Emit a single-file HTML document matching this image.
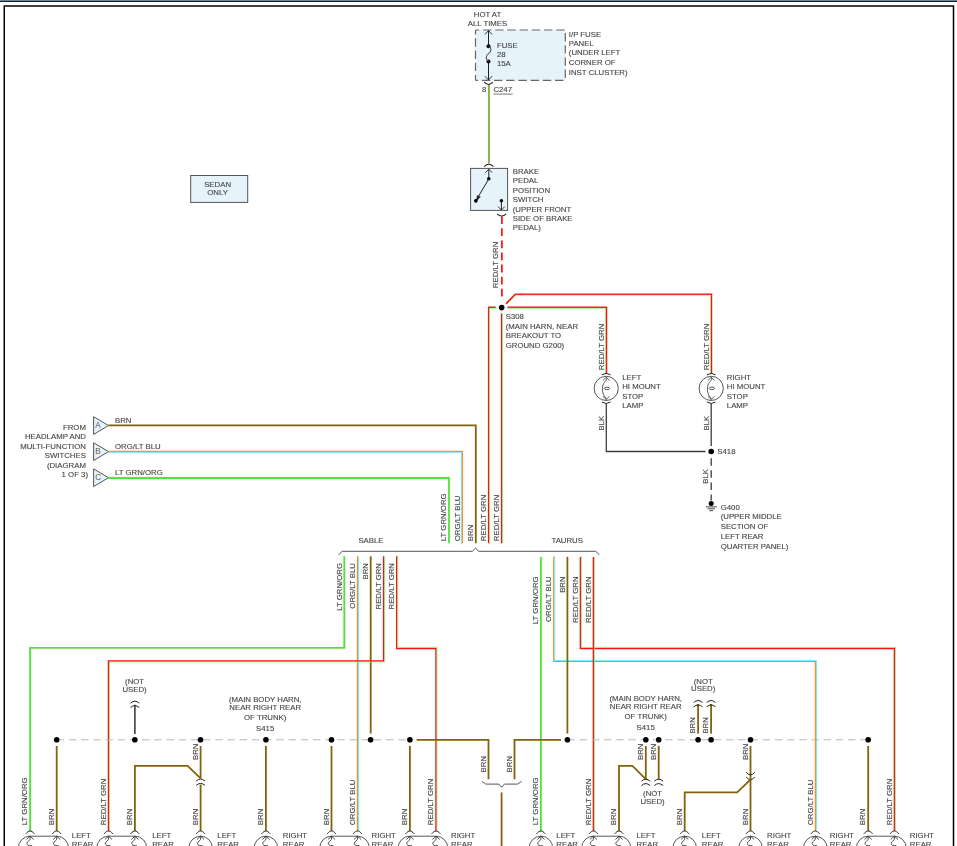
<!DOCTYPE html>
<html><head><meta charset="utf-8"><style>
html,body{margin:0;padding:0;background:#fff;width:957px;height:846px;overflow:hidden}
svg{display:block;will-change:transform}
text{font-family:"Liberation Sans",sans-serif}
</style></head><body>
<svg width="957" height="846" viewBox="0 0 957 846" font-family="Liberation Sans, sans-serif"><rect x="0" y="0" width="957" height="1" fill="#6f8296"/>
<rect x="0" y="1" width="957" height="1" fill="#142030"/>
<rect x="4.25" y="6" width="949.25" height="900" fill="none" stroke="#000" stroke-width="1.5"/>
<rect x="475.5" y="30" width="89.8" height="50.3" fill="#e6f3fb" stroke="none"/>
<path d="M475.5,30 L565.3,30" stroke="#666" stroke-width="1.2" fill="none" stroke-dasharray="8.4 3.8" stroke-dashoffset="4.7"/>
<path d="M475.5,80.3 L565.3,80.3" stroke="#666" stroke-width="1.2" fill="none" stroke-dasharray="8.4 3.8" stroke-dashoffset="5.9"/>
<path d="M475.5,30 L475.5,80.3" stroke="#666" stroke-width="1.2" fill="none" stroke-dasharray="8.4 3.8" stroke-dashoffset="3.9"/>
<path d="M565.3,30 L565.3,80.3" stroke="#666" stroke-width="1.2" fill="none" stroke-dasharray="8.4 3.8" stroke-dashoffset="9.2"/>
<path d="M488.5,30.6 L488.5,46.1 M488.5,61.5 L488.5,80" stroke="#222" stroke-width="1" fill="none" />
<path d="M484.90,34.40 L488.50,30.60 L492.10,34.40" stroke="#222" stroke-width="0.9" fill="none" />
<path d="M484.90,76.20 L488.50,80.00 L492.10,76.20" stroke="#222" stroke-width="0.9" fill="none" />
<circle cx="488.50" cy="46.20" r="2.0" fill="#000"/>
<circle cx="488.50" cy="61.50" r="2.0" fill="#000"/>
<path d="M488.5,46.2 C491.8,47.5 491.8,51.5 488.5,53.6 C485.4,55.6 485.4,59.5 488.5,61.5" stroke="#555" stroke-width="1.1" fill="none" />
<text x="496.90" y="47.70" text-anchor="start" font-size="7.8" fill="#444444" stroke="#444444" stroke-width="0.12">FUSE</text>
<text x="496.90" y="56.90" text-anchor="start" font-size="7.8" fill="#444444" stroke="#444444" stroke-width="0.12">28</text>
<text x="496.90" y="66.30" text-anchor="start" font-size="7.8" fill="#444444" stroke="#444444" stroke-width="0.12">15A</text>
<text x="487.50" y="16.70" text-anchor="middle" font-size="7.8" fill="#444444" stroke="#444444" stroke-width="0.12">HOT AT</text>
<text x="487.50" y="25.50" text-anchor="middle" font-size="7.8" fill="#444444" stroke="#444444" stroke-width="0.12">ALL TIMES</text>
<text x="568.80" y="36.70" text-anchor="start" font-size="7.8" fill="#444444" stroke="#444444" stroke-width="0.12">I/P FUSE</text>
<text x="568.80" y="45.90" text-anchor="start" font-size="7.8" fill="#444444" stroke="#444444" stroke-width="0.12">PANEL</text>
<text x="568.80" y="55.40" text-anchor="start" font-size="7.8" fill="#444444" stroke="#444444" stroke-width="0.12">(UNDER LEFT</text>
<text x="568.80" y="64.90" text-anchor="start" font-size="7.8" fill="#444444" stroke="#444444" stroke-width="0.12">CORNER OF</text>
<text x="568.80" y="74.50" text-anchor="start" font-size="7.8" fill="#444444" stroke="#444444" stroke-width="0.12">INST CLUSTER)</text>
<path d="M484.10,82.20 Q488.50,86.80 492.90,82.20" stroke="#222" stroke-width="1.1" fill="none" />
<text x="486.30" y="91.50" text-anchor="end" font-size="7.8" fill="#444444" stroke="#444444" stroke-width="0.12">8</text>
<text x="493.40" y="91.50" text-anchor="start" font-size="7.8" fill="#444444" stroke="#444444" stroke-width="0.12">C247</text>
<path d="M493.4,94.1 L512.6,94.1" stroke="#555" stroke-width="0.8" fill="none" />
<path d="M488.50,85.00 L488.50,163.50" stroke="#22ee22" stroke-width="1.15" fill="none" stroke-linejoin="miter" stroke-linecap="butt"/>
<path d="M489.50,85.00 L489.50,163.50" stroke="#ff5a5a" stroke-width="0.8" fill="none" stroke-linejoin="miter" stroke-linecap="butt"/>
<path d="M484.20,166.60 Q488.80,162.00 493.40,166.60" stroke="#222" stroke-width="1.1" fill="none" />
<rect x="470.6" y="168.4" width="37" height="42" fill="#e6f3fb" stroke="#555" stroke-width="1"/>
<path d="M488.8,169.2 L488.8,178.8" stroke="#222" stroke-width="1" fill="none" />
<path d="M485.40,172.60 L488.80,169.20 L492.20,172.60" stroke="#222" stroke-width="0.9" fill="none" />
<circle cx="488.80" cy="178.80" r="1.8" fill="#000"/>
<path d="M488.8,178.8 L475.8,200.9" stroke="#222" stroke-width="1" fill="none" />
<path d="M477.2,195.6 L480.4,196.8 L476.6,201 Z" stroke="#222" stroke-width="0.5" fill="#222" />
<circle cx="475.80" cy="200.90" r="1.8" fill="#000"/>
<circle cx="501.40" cy="200.70" r="1.8" fill="#000"/>
<path d="M501.4,200.7 L501.4,210" stroke="#222" stroke-width="1" fill="none" />
<path d="M498.00,206.60 L501.40,210.00 L504.80,206.60" stroke="#222" stroke-width="0.9" fill="none" />
<path d="M497.00,213.80 Q501.60,218.20 506.20,213.80" stroke="#222" stroke-width="1.1" fill="none" />
<text x="512.75" y="173.70" text-anchor="start" font-size="7.8" fill="#444444" stroke="#444444" stroke-width="0.12">BRAKE</text>
<text x="512.75" y="182.80" text-anchor="start" font-size="7.8" fill="#444444" stroke="#444444" stroke-width="0.12">PEDAL</text>
<text x="512.75" y="192.60" text-anchor="start" font-size="7.8" fill="#444444" stroke="#444444" stroke-width="0.12">POSITION</text>
<text x="512.75" y="201.80" text-anchor="start" font-size="7.8" fill="#444444" stroke="#444444" stroke-width="0.12">SWITCH</text>
<text x="512.75" y="211.50" text-anchor="start" font-size="7.8" fill="#444444" stroke="#444444" stroke-width="0.12">(UPPER FRONT</text>
<text x="512.75" y="220.70" text-anchor="start" font-size="7.8" fill="#444444" stroke="#444444" stroke-width="0.12">SIDE OF BRAKE</text>
<text x="512.75" y="230.40" text-anchor="start" font-size="7.8" fill="#444444" stroke="#444444" stroke-width="0.12">PEDAL)</text>
<path d="M501.90,216.20 L501.90,298.00" stroke="#ff1010" stroke-width="1.7" fill="none" stroke-linejoin="miter" stroke-linecap="butt" stroke-dasharray="7.8 4.3"/>
<text transform="translate(497.80,288.20) rotate(-90)" text-anchor="start" font-size="7.8" fill="#444444" stroke="#444444" stroke-width="0.12">RED/LT GRN</text>
<circle cx="501.70" cy="307.60" r="2.8" fill="#000"/>
<path d="M495.70,307.30 L488.60,307.30 L488.60,543.30" stroke="#ff1010" stroke-width="1.45" fill="none" stroke-linejoin="miter" stroke-linecap="butt"/>
<path d="M496.75,308.35 L489.65,308.35 L489.65,544.35" stroke="#7cf07c" stroke-width="0.75" fill="none" stroke-linejoin="miter" stroke-linecap="butt"/>
<path d="M501.60,313.50 L501.60,543.30" stroke="#ff1010" stroke-width="1.45" fill="none" stroke-linejoin="miter" stroke-linecap="butt"/>
<path d="M502.65,313.50 L502.65,543.30" stroke="#7cf07c" stroke-width="0.75" fill="none" stroke-linejoin="miter" stroke-linecap="butt"/>
<path d="M606.50,373.50 L606.50,307.30 L507.60,307.30" stroke="#ff1010" stroke-width="1.45" fill="none" stroke-linejoin="miter" stroke-linecap="butt"/>
<path d="M605.45,374.55 L605.45,308.35 L506.55,308.35" stroke="#7cf07c" stroke-width="0.75" fill="none" stroke-linejoin="miter" stroke-linecap="butt"/>
<path d="M711.50,373.50 L711.50,294.20 L514.80,294.20" stroke="#ff1010" stroke-width="1.45" fill="none" stroke-linejoin="miter" stroke-linecap="butt"/>
<path d="M710.45,374.55 L710.45,295.25 L513.75,295.25" stroke="#7cf07c" stroke-width="0.75" fill="none" stroke-linejoin="miter" stroke-linecap="butt"/>
<path d="M515.30,294.20 L506.00,303.60" stroke="#ff1010" stroke-width="1.6" fill="none" stroke-linejoin="miter" stroke-linecap="butt"/>
<path d="M515.40,295.35 L506.82,304.42" stroke="#3ee83e" stroke-width="0.75" fill="none" stroke-linejoin="miter" stroke-linecap="butt"/>
<text x="505.70" y="318.80" text-anchor="start" font-size="7.8" fill="#444444" stroke="#444444" stroke-width="0.12">S308</text>
<text x="505.70" y="328.60" text-anchor="start" font-size="7.8" fill="#444444" stroke="#444444" stroke-width="0.12">(MAIN HARN, NEAR</text>
<text x="505.70" y="338.30" text-anchor="start" font-size="7.8" fill="#444444" stroke="#444444" stroke-width="0.12">BREAKOUT TO</text>
<text x="505.70" y="347.70" text-anchor="start" font-size="7.8" fill="#444444" stroke="#444444" stroke-width="0.12">GROUND G200)</text>
<rect x="190.7" y="175.5" width="57" height="26.9" fill="#e6f3fb" stroke="#555" stroke-width="1"/>
<text x="217.60" y="186.90" text-anchor="middle" font-size="7.8" fill="#444444" stroke="#444444" stroke-width="0.12">SEDAN</text>
<text x="217.60" y="194.80" text-anchor="middle" font-size="7.8" fill="#444444" stroke="#444444" stroke-width="0.12">ONLY</text>
<path d="M601.90,374.80 Q606.20,371.80 610.50,374.80" stroke="#222" stroke-width="1.0" fill="none" />
<circle cx="606.2" cy="388.4" r="12.1" fill="none" stroke="#444" stroke-width="0.9"/>
<path d="M602.90,380.50 L606.20,377.30 L609.50,380.50" stroke="#333" stroke-width="0.8" fill="none" />
<path d="M602.90,396.30 L606.20,399.50 L609.50,396.30" stroke="#333" stroke-width="0.8" fill="none" />
<path d="M606.2,377.3 C607.8000000000001,379.6 605.0,381.2 603.6,383.6 C602.0,386.4 602.0,391 603.4000000000001,394.4 C604.2,396.8 606.8000000000001,398 606.2,399.5" stroke="#333" stroke-width="0.8" fill="none" />
<ellipse cx="606.9000000000001" cy="388.4" rx="2.8" ry="1.2" fill="none" stroke="#333" stroke-width="0.8"/>
<path d="M601.90,402.00 Q606.20,405.00 610.50,402.00" stroke="#222" stroke-width="1.0" fill="none" />
<path d="M706.90,374.80 Q711.20,371.80 715.50,374.80" stroke="#222" stroke-width="1.0" fill="none" />
<circle cx="711.2" cy="388.4" r="12.1" fill="none" stroke="#444" stroke-width="0.9"/>
<path d="M707.90,380.50 L711.20,377.30 L714.50,380.50" stroke="#333" stroke-width="0.8" fill="none" />
<path d="M707.90,396.30 L711.20,399.50 L714.50,396.30" stroke="#333" stroke-width="0.8" fill="none" />
<path d="M711.2,377.3 C712.8000000000001,379.6 710.0,381.2 708.6,383.6 C707.0,386.4 707.0,391 708.4000000000001,394.4 C709.2,396.8 711.8000000000001,398 711.2,399.5" stroke="#333" stroke-width="0.8" fill="none" />
<ellipse cx="711.9000000000001" cy="388.4" rx="2.8" ry="1.2" fill="none" stroke="#333" stroke-width="0.8"/>
<path d="M706.90,402.00 Q711.20,405.00 715.50,402.00" stroke="#222" stroke-width="1.0" fill="none" />
<text x="622.20" y="379.50" text-anchor="start" font-size="7.8" fill="#444444" stroke="#444444" stroke-width="0.12">LEFT</text>
<text x="622.20" y="388.80" text-anchor="start" font-size="7.8" fill="#444444" stroke="#444444" stroke-width="0.12">HI MOUNT</text>
<text x="622.20" y="398.50" text-anchor="start" font-size="7.8" fill="#444444" stroke="#444444" stroke-width="0.12">STOP</text>
<text x="622.20" y="407.50" text-anchor="start" font-size="7.8" fill="#444444" stroke="#444444" stroke-width="0.12">LAMP</text>
<text x="726.80" y="379.50" text-anchor="start" font-size="7.8" fill="#444444" stroke="#444444" stroke-width="0.12">RIGHT</text>
<text x="726.80" y="388.80" text-anchor="start" font-size="7.8" fill="#444444" stroke="#444444" stroke-width="0.12">HI MOUNT</text>
<text x="726.80" y="398.50" text-anchor="start" font-size="7.8" fill="#444444" stroke="#444444" stroke-width="0.12">STOP</text>
<text x="726.80" y="407.50" text-anchor="start" font-size="7.8" fill="#444444" stroke="#444444" stroke-width="0.12">LAMP</text>
<text transform="translate(603.80,370.20) rotate(-90)" text-anchor="start" font-size="7.8" fill="#444444" stroke="#444444" stroke-width="0.12">RED/LT GRN</text>
<text transform="translate(708.90,370.20) rotate(-90)" text-anchor="start" font-size="7.8" fill="#444444" stroke="#444444" stroke-width="0.12">RED/LT GRN</text>
<text transform="translate(603.50,430.60) rotate(-90)" text-anchor="start" font-size="7.8" fill="#444444" stroke="#444444" stroke-width="0.12">BLK</text>
<text transform="translate(708.50,430.60) rotate(-90)" text-anchor="start" font-size="7.8" fill="#444444" stroke="#444444" stroke-width="0.12">BLK</text>
<path d="M606.30,403.50 L606.30,451.50 L705.50,451.50" stroke="#3c3c3c" stroke-width="1.3" fill="none" stroke-linejoin="miter" stroke-linecap="butt"/>
<path d="M711.20,403.50 L711.20,446.00" stroke="#3c3c3c" stroke-width="1.3" fill="none" stroke-linejoin="miter" stroke-linecap="butt"/>
<circle cx="711.20" cy="451.50" r="2.8" fill="#000"/>
<text x="717.30" y="454.20" text-anchor="start" font-size="7.8" fill="#444444" stroke="#444444" stroke-width="0.12">S418</text>
<path d="M711.20,458.20 L711.20,500.50" stroke="#3c3c3c" stroke-width="1.3" fill="none" stroke-linejoin="miter" stroke-linecap="butt" stroke-dasharray="7.5 4.6"/>
<text transform="translate(707.70,483.70) rotate(-90)" text-anchor="start" font-size="7.8" fill="#444444" stroke="#444444" stroke-width="0.12">BLK</text>
<circle cx="711.20" cy="503.60" r="2.5" fill="#000"/>
<path d="M705.9,506.9 L716.9,506.9 M707.6,508.8 L715,508.8 M709.3,510.7 L713.1,510.7" stroke="#333" stroke-width="0.9" fill="none" />
<text x="720.70" y="509.70" text-anchor="start" font-size="7.8" fill="#444444" stroke="#444444" stroke-width="0.12">G400</text>
<text x="720.70" y="519.30" text-anchor="start" font-size="7.8" fill="#444444" stroke="#444444" stroke-width="0.12">(UPPER MIDDLE</text>
<text x="720.70" y="529.00" text-anchor="start" font-size="7.8" fill="#444444" stroke="#444444" stroke-width="0.12">SECTION OF</text>
<text x="720.70" y="538.80" text-anchor="start" font-size="7.8" fill="#444444" stroke="#444444" stroke-width="0.12">LEFT REAR</text>
<text x="720.70" y="548.50" text-anchor="start" font-size="7.8" fill="#444444" stroke="#444444" stroke-width="0.12">QUARTER PANEL)</text>
<path d="M93.6,416.70 L108.5,425.50 L93.6,434.40 Z" fill="#e6f3fb" stroke="#555" stroke-width="1"/>
<text x="98.10" y="428.20" text-anchor="middle" font-size="8.2" fill="#707070" stroke="#707070" stroke-width="0.12">A</text>
<text x="115.00" y="422.80" text-anchor="start" font-size="7.8" fill="#444444" stroke="#444444" stroke-width="0.12">BRN</text>
<path d="M93.6,442.80 L108.5,451.60 L93.6,460.50 Z" fill="#e6f3fb" stroke="#555" stroke-width="1"/>
<text x="98.10" y="454.30" text-anchor="middle" font-size="8.2" fill="#707070" stroke="#707070" stroke-width="0.12">B</text>
<text x="115.00" y="448.90" text-anchor="start" font-size="7.8" fill="#444444" stroke="#444444" stroke-width="0.12">ORG/LT BLU</text>
<path d="M93.6,468.90 L108.5,477.70 L93.6,486.60 Z" fill="#e6f3fb" stroke="#555" stroke-width="1"/>
<text x="98.10" y="480.40" text-anchor="middle" font-size="8.2" fill="#707070" stroke="#707070" stroke-width="0.12">C</text>
<text x="115.00" y="475.00" text-anchor="start" font-size="7.8" fill="#444444" stroke="#444444" stroke-width="0.12">LT GRN/ORG</text>
<path d="M108.40,425.30 L475.80,425.30 L475.80,543.30" stroke="#83620c" stroke-width="1.8" fill="none" stroke-linejoin="miter" stroke-linecap="butt"/>
<path d="M108.40,451.30 L462.40,451.30 L462.40,543.30" stroke="#ff8c1a" stroke-width="1.2" fill="none" stroke-linejoin="miter" stroke-linecap="butt"/>
<path d="M107.35,452.35 L461.35,452.35 L461.35,544.35" stroke="#70e6f5" stroke-width="0.95" fill="none" stroke-linejoin="miter" stroke-linecap="butt"/>
<path d="M108.40,478.00 L449.00,478.00 L449.00,543.30" stroke="#3ee83e" stroke-width="1.8" fill="none" stroke-linejoin="miter" stroke-linecap="butt"/>
<path d="M109.40,477.00 L450.00,477.00 L450.00,542.30" stroke="#f4c070" stroke-width="0.35" fill="none" stroke-linejoin="miter" stroke-linecap="butt"/>
<text x="85.90" y="429.80" text-anchor="end" font-size="7.8" fill="#444444" stroke="#444444" stroke-width="0.12">FROM</text>
<text x="85.90" y="439.20" text-anchor="end" font-size="7.8" fill="#444444" stroke="#444444" stroke-width="0.12">HEADLAMP AND</text>
<text x="85.90" y="448.90" text-anchor="end" font-size="7.8" fill="#444444" stroke="#444444" stroke-width="0.12">MULTI-FUNCTION</text>
<text x="85.90" y="458.40" text-anchor="end" font-size="7.8" fill="#444444" stroke="#444444" stroke-width="0.12">SWITCHES</text>
<text x="85.90" y="467.80" text-anchor="end" font-size="7.8" fill="#444444" stroke="#444444" stroke-width="0.12">(DIAGRAM</text>
<text x="88.00" y="477.20" text-anchor="end" font-size="7.8" fill="#444444" stroke="#444444" stroke-width="0.12">1 OF 3)</text>
<text transform="translate(446.20,541.20) rotate(-90)" text-anchor="start" font-size="7.8" fill="#444444" stroke="#444444" stroke-width="0.12">LT GRN/ORG</text>
<text transform="translate(459.60,541.20) rotate(-90)" text-anchor="start" font-size="7.8" fill="#444444" stroke="#444444" stroke-width="0.12">ORG/LT BLU</text>
<text transform="translate(473.00,541.20) rotate(-90)" text-anchor="start" font-size="7.8" fill="#444444" stroke="#444444" stroke-width="0.12">BRN</text>
<text transform="translate(485.50,541.20) rotate(-90)" text-anchor="start" font-size="7.8" fill="#444444" stroke="#444444" stroke-width="0.12">RED/LT GRN</text>
<text transform="translate(498.50,541.20) rotate(-90)" text-anchor="start" font-size="7.8" fill="#444444" stroke="#444444" stroke-width="0.12">RED/LT GRN</text>
<path d="M338.4,554.8 L342.2,551.3 L472.4,551.3 L475.6,548.2 L478.8,551.3 L595.8,551.3 L599.4,554.8" stroke="#555" stroke-width="1" fill="none" />
<text x="371.00" y="542.70" text-anchor="middle" font-size="7.8" fill="#444444" stroke="#444444" stroke-width="0.12">SABLE</text>
<text x="567.20" y="542.70" text-anchor="middle" font-size="7.8" fill="#444444" stroke="#444444" stroke-width="0.12">TAURUS</text>
<path d="M344.30,556.30 L344.30,647.90 L30.10,647.90 L30.10,831.20" stroke="#3ee83e" stroke-width="1.8" fill="none" stroke-linejoin="miter" stroke-linecap="butt"/>
<path d="M345.30,557.30 L345.30,648.90 L31.10,648.90 L31.10,832.20" stroke="#f4c070" stroke-width="0.35" fill="none" stroke-linejoin="miter" stroke-linecap="butt"/>
<path d="M357.50,556.30 L357.50,831.00" stroke="#ff8c1a" stroke-width="1.2" fill="none" stroke-linejoin="miter" stroke-linecap="butt"/>
<path d="M358.55,556.30 L358.55,831.00" stroke="#70e6f5" stroke-width="0.95" fill="none" stroke-linejoin="miter" stroke-linecap="butt"/>
<path d="M370.70,556.30 L370.70,733.50" stroke="#83620c" stroke-width="1.8" fill="none" stroke-linejoin="miter" stroke-linecap="butt"/>
<path d="M383.60,556.30 L383.60,660.90 L108.50,660.90 L108.50,831.00" stroke="#ff1010" stroke-width="1.45" fill="none" stroke-linejoin="miter" stroke-linecap="butt"/>
<path d="M384.65,557.35 L384.65,661.95 L109.55,661.95 L109.55,832.05" stroke="#7cf07c" stroke-width="0.75" fill="none" stroke-linejoin="miter" stroke-linecap="butt"/>
<path d="M396.70,556.30 L396.70,648.40 L436.00,648.40 L436.00,831.00" stroke="#ff1010" stroke-width="1.45" fill="none" stroke-linejoin="miter" stroke-linecap="butt"/>
<path d="M397.75,555.25 L397.75,647.35 L437.05,647.35 L437.05,829.95" stroke="#7cf07c" stroke-width="0.75" fill="none" stroke-linejoin="miter" stroke-linecap="butt"/>
<text transform="translate(341.50,563.00) rotate(-90)" text-anchor="end" font-size="7.8" fill="#444444" stroke="#444444" stroke-width="0.12">LT GRN/ORG</text>
<text transform="translate(354.70,563.00) rotate(-90)" text-anchor="end" font-size="7.8" fill="#444444" stroke="#444444" stroke-width="0.12">ORG/LT BLU</text>
<text transform="translate(367.90,563.00) rotate(-90)" text-anchor="end" font-size="7.8" fill="#444444" stroke="#444444" stroke-width="0.12">BRN</text>
<text transform="translate(380.80,563.00) rotate(-90)" text-anchor="end" font-size="7.8" fill="#444444" stroke="#444444" stroke-width="0.12">RED/LT GRN</text>
<text transform="translate(393.90,563.00) rotate(-90)" text-anchor="end" font-size="7.8" fill="#444444" stroke="#444444" stroke-width="0.12">RED/LT GRN</text>
<path d="M540.90,556.90 L540.90,831.00" stroke="#3ee83e" stroke-width="1.8" fill="none" stroke-linejoin="miter" stroke-linecap="butt"/>
<path d="M541.90,556.90 L541.90,831.00" stroke="#f4c070" stroke-width="0.35" fill="none" stroke-linejoin="miter" stroke-linecap="butt"/>
<path d="M553.70,556.90 L553.70,661.50 L815.40,661.50 L815.40,831.00" stroke="#ff8c1a" stroke-width="1.2" fill="none" stroke-linejoin="miter" stroke-linecap="butt"/>
<path d="M554.75,555.85 L554.75,660.45 L816.45,660.45 L816.45,829.95" stroke="#70e6f5" stroke-width="0.95" fill="none" stroke-linejoin="miter" stroke-linecap="butt"/>
<path d="M567.40,556.90 L567.40,733.50" stroke="#83620c" stroke-width="1.8" fill="none" stroke-linejoin="miter" stroke-linecap="butt"/>
<path d="M580.40,556.90 L580.40,648.40 L894.40,648.40 L894.40,831.00" stroke="#ff1010" stroke-width="1.45" fill="none" stroke-linejoin="miter" stroke-linecap="butt"/>
<path d="M581.45,555.85 L581.45,647.35 L895.45,647.35 L895.45,829.95" stroke="#7cf07c" stroke-width="0.75" fill="none" stroke-linejoin="miter" stroke-linecap="butt"/>
<path d="M593.40,556.90 L593.40,831.00" stroke="#ff1010" stroke-width="1.45" fill="none" stroke-linejoin="miter" stroke-linecap="butt"/>
<path d="M594.45,556.90 L594.45,831.00" stroke="#7cf07c" stroke-width="0.75" fill="none" stroke-linejoin="miter" stroke-linecap="butt"/>
<text transform="translate(538.10,576.40) rotate(-90)" text-anchor="end" font-size="7.8" fill="#444444" stroke="#444444" stroke-width="0.12">LT GRN/ORG</text>
<text transform="translate(551.10,576.40) rotate(-90)" text-anchor="end" font-size="7.8" fill="#444444" stroke="#444444" stroke-width="0.12">ORG/LT BLU</text>
<text transform="translate(564.60,576.40) rotate(-90)" text-anchor="end" font-size="7.8" fill="#444444" stroke="#444444" stroke-width="0.12">BRN</text>
<text transform="translate(577.60,576.40) rotate(-90)" text-anchor="end" font-size="7.8" fill="#444444" stroke="#444444" stroke-width="0.12">RED/LT GRN</text>
<text transform="translate(590.60,576.40) rotate(-90)" text-anchor="end" font-size="7.8" fill="#444444" stroke="#444444" stroke-width="0.12">RED/LT GRN</text>
<path d="M56.70,739.80 L409.90,739.80" stroke="#b8b8b8" stroke-width="1.0" fill="none" stroke-linejoin="miter" stroke-linecap="butt" stroke-dasharray="7.5 4.7"/>
<path d="M567.40,739.80 L868.20,739.80" stroke="#b8b8b8" stroke-width="1.0" fill="none" stroke-linejoin="miter" stroke-linecap="butt" stroke-dasharray="7.5 4.7"/>
<circle cx="56.70" cy="739.80" r="2.8" fill="#000"/>
<circle cx="134.80" cy="739.80" r="2.8" fill="#000"/>
<circle cx="200.50" cy="739.80" r="2.8" fill="#000"/>
<circle cx="265.90" cy="739.80" r="2.8" fill="#000"/>
<circle cx="331.50" cy="739.80" r="2.8" fill="#000"/>
<circle cx="370.60" cy="739.80" r="2.8" fill="#000"/>
<circle cx="409.90" cy="739.80" r="2.8" fill="#000"/>
<circle cx="567.40" cy="739.80" r="2.8" fill="#000"/>
<circle cx="645.80" cy="739.80" r="2.8" fill="#000"/>
<circle cx="658.70" cy="739.80" r="2.8" fill="#000"/>
<circle cx="698.10" cy="739.80" r="2.8" fill="#000"/>
<circle cx="711.10" cy="739.80" r="2.8" fill="#000"/>
<circle cx="750.50" cy="739.80" r="2.8" fill="#000"/>
<circle cx="868.20" cy="739.80" r="2.8" fill="#000"/>
<text x="265.20" y="701.80" text-anchor="middle" font-size="7.8" fill="#444444" stroke="#444444" stroke-width="0.12">(MAIN BODY HARN,</text>
<text x="265.20" y="709.80" text-anchor="middle" font-size="7.8" fill="#444444" stroke="#444444" stroke-width="0.12">NEAR RIGHT REAR</text>
<text x="265.20" y="719.60" text-anchor="middle" font-size="7.8" fill="#444444" stroke="#444444" stroke-width="0.12">OF TRUNK)</text>
<text x="265.20" y="730.60" text-anchor="middle" font-size="7.8" fill="#444444" stroke="#444444" stroke-width="0.12">S415</text>
<text x="645.70" y="701.00" text-anchor="middle" font-size="7.8" fill="#444444" stroke="#444444" stroke-width="0.12">(MAIN BODY HARN,</text>
<text x="645.70" y="709.00" text-anchor="middle" font-size="7.8" fill="#444444" stroke="#444444" stroke-width="0.12">NEAR RIGHT REAR</text>
<text x="645.70" y="719.30" text-anchor="middle" font-size="7.8" fill="#444444" stroke="#444444" stroke-width="0.12">OF TRUNK)</text>
<text x="645.70" y="730.40" text-anchor="middle" font-size="7.8" fill="#444444" stroke="#444444" stroke-width="0.12">S415</text>
<path d="M56.70,746.00 L56.70,831.00" stroke="#83620c" stroke-width="1.8" fill="none" stroke-linejoin="miter" stroke-linecap="butt"/>
<path d="M134.90,733.90 L134.90,704.80" stroke="#222" stroke-width="1.4" fill="none" stroke-linejoin="miter" stroke-linecap="butt"/>
<path d="M130.50,703.20 Q134.90,699.20 139.30,703.20" stroke="#222" stroke-width="1.0" fill="none" />
<path d="M130.50,707.60 Q134.90,703.60 139.30,707.60" stroke="#222" stroke-width="1.0" fill="none" />
<text x="134.60" y="683.70" text-anchor="middle" font-size="7.8" fill="#444444" stroke="#444444" stroke-width="0.12">(NOT</text>
<text x="134.60" y="691.60" text-anchor="middle" font-size="7.8" fill="#444444" stroke="#444444" stroke-width="0.12">USED)</text>
<path d="M200.60,746.00 L200.60,778.60" stroke="#83620c" stroke-width="1.8" fill="none" stroke-linejoin="miter" stroke-linecap="butt"/>
<path d="M200.60,784.50 L200.60,831.00" stroke="#83620c" stroke-width="1.8" fill="none" stroke-linejoin="miter" stroke-linecap="butt"/>
<path d="M196.20,781.00 Q200.60,777.00 205.00,781.00" stroke="#222" stroke-width="1.0" fill="none" />
<path d="M196.20,785.40 Q200.60,781.40 205.00,785.40" stroke="#222" stroke-width="1.0" fill="none" />
<path d="M134.90,831.00 L134.90,765.90 L187.60,765.90 L200.60,778.30" stroke="#83620c" stroke-width="1.8" fill="none" stroke-linejoin="miter" stroke-linecap="butt"/>
<path d="M265.90,746.00 L265.90,831.00" stroke="#83620c" stroke-width="1.8" fill="none" stroke-linejoin="miter" stroke-linecap="butt"/>
<path d="M331.50,746.00 L331.50,831.00" stroke="#83620c" stroke-width="1.8" fill="none" stroke-linejoin="miter" stroke-linecap="butt"/>
<path d="M409.90,746.00 L409.90,831.00" stroke="#83620c" stroke-width="1.8" fill="none" stroke-linejoin="miter" stroke-linecap="butt"/>
<path d="M416.60,739.80 L488.50,739.80 L488.50,779.30" stroke="#83620c" stroke-width="1.8" fill="none" stroke-linejoin="miter" stroke-linecap="butt"/>
<path d="M561.00,739.80 L514.50,739.80 L514.50,779.30" stroke="#83620c" stroke-width="1.8" fill="none" stroke-linejoin="miter" stroke-linecap="butt"/>
<path d="M481.9,781.3 L485.7,784.1 L498.8,784.1 L501.7,787.3 L504.4,784.1 L517.6,784.1 L521.7,781.3" stroke="#444" stroke-width="0.9" fill="none" />
<path d="M501.60,792.40 L501.60,846.00" stroke="#83620c" stroke-width="1.8" fill="none" stroke-linejoin="miter" stroke-linecap="butt"/>
<text transform="translate(485.70,772.40) rotate(-90)" text-anchor="start" font-size="7.8" fill="#444444" stroke="#444444" stroke-width="0.12">BRN</text>
<text transform="translate(511.70,772.40) rotate(-90)" text-anchor="start" font-size="7.8" fill="#444444" stroke="#444444" stroke-width="0.12">BRN</text>
<path d="M645.80,746.00 L645.80,779.20" stroke="#83620c" stroke-width="1.8" fill="none" stroke-linejoin="miter" stroke-linecap="butt"/>
<path d="M619.00,831.00 L619.00,765.90 L632.40,765.90 L645.80,779.20" stroke="#83620c" stroke-width="1.8" fill="none" stroke-linejoin="miter" stroke-linecap="butt"/>
<path d="M641.40,781.20 Q645.80,777.20 650.20,781.20" stroke="#222" stroke-width="1.0" fill="none" />
<path d="M641.40,785.60 Q645.80,781.60 650.20,785.60" stroke="#222" stroke-width="1.0" fill="none" />
<path d="M658.70,746.00 L658.70,779.20" stroke="#83620c" stroke-width="1.8" fill="none" stroke-linejoin="miter" stroke-linecap="butt"/>
<path d="M654.30,781.20 Q658.70,777.20 663.10,781.20" stroke="#222" stroke-width="1.0" fill="none" />
<path d="M654.30,785.60 Q658.70,781.60 663.10,785.60" stroke="#222" stroke-width="1.0" fill="none" />
<text x="652.60" y="795.90" text-anchor="middle" font-size="7.8" fill="#444444" stroke="#444444" stroke-width="0.12">(NOT</text>
<text x="652.60" y="803.70" text-anchor="middle" font-size="7.8" fill="#444444" stroke="#444444" stroke-width="0.12">USED)</text>
<path d="M698.10,733.50 L698.10,704.00" stroke="#83620c" stroke-width="1.8" fill="none" stroke-linejoin="miter" stroke-linecap="butt"/>
<path d="M711.10,733.50 L711.10,704.00" stroke="#83620c" stroke-width="1.8" fill="none" stroke-linejoin="miter" stroke-linecap="butt"/>
<path d="M693.70,702.50 Q698.10,698.50 702.50,702.50" stroke="#222" stroke-width="1.0" fill="none" />
<path d="M693.70,706.90 Q698.10,702.90 702.50,706.90" stroke="#222" stroke-width="1.0" fill="none" />
<path d="M706.70,702.50 Q711.10,698.50 715.50,702.50" stroke="#222" stroke-width="1.0" fill="none" />
<path d="M706.70,706.90 Q711.10,702.90 715.50,706.90" stroke="#222" stroke-width="1.0" fill="none" />
<text x="703.20" y="683.80" text-anchor="middle" font-size="7.8" fill="#444444" stroke="#444444" stroke-width="0.12">(NOT</text>
<text x="703.20" y="691.30" text-anchor="middle" font-size="7.8" fill="#444444" stroke="#444444" stroke-width="0.12">USED)</text>
<path d="M750.50,746.00 L750.50,779.60" stroke="#83620c" stroke-width="1.8" fill="none" stroke-linejoin="miter" stroke-linecap="butt"/>
<path d="M750.50,779.60 L750.50,831.00" stroke="#83620c" stroke-width="1.8" fill="none" stroke-linejoin="miter" stroke-linecap="butt"/>
<path d="M746.20,772.30 Q750.50,777.30 754.80,772.30" stroke="#222" stroke-width="1.0" fill="none" />
<path d="M746.20,777.10 Q750.50,782.10 754.80,777.10" stroke="#222" stroke-width="1.0" fill="none" />
<path d="M684.70,831.00 L684.70,792.30 L737.10,792.30 L750.50,779.60" stroke="#83620c" stroke-width="1.8" fill="none" stroke-linejoin="miter" stroke-linecap="butt"/>
<path d="M868.20,746.00 L868.20,831.00" stroke="#83620c" stroke-width="1.8" fill="none" stroke-linejoin="miter" stroke-linecap="butt"/>
<text transform="translate(197.80,743.60) rotate(-90)" text-anchor="end" font-size="7.8" fill="#444444" stroke="#444444" stroke-width="0.12">BRN</text>
<text transform="translate(643.00,743.50) rotate(-90)" text-anchor="end" font-size="7.8" fill="#444444" stroke="#444444" stroke-width="0.12">BRN</text>
<text transform="translate(655.90,743.50) rotate(-90)" text-anchor="end" font-size="7.8" fill="#444444" stroke="#444444" stroke-width="0.12">BRN</text>
<text transform="translate(747.70,743.50) rotate(-90)" text-anchor="end" font-size="7.8" fill="#444444" stroke="#444444" stroke-width="0.12">BRN</text>
<text transform="translate(695.30,733.60) rotate(-90)" text-anchor="start" font-size="7.8" fill="#444444" stroke="#444444" stroke-width="0.12">BRN</text>
<text transform="translate(708.30,733.60) rotate(-90)" text-anchor="start" font-size="7.8" fill="#444444" stroke="#444444" stroke-width="0.12">BRN</text>
<path d="M30.1,836.2 L56.7,836.2 A11.8,11.8 0 0 1 56.7,859.8 L30.1,859.8 A11.8,11.8 0 0 1 30.1,836.2 Z" fill="none" stroke="#444" stroke-width="0.9"/>
<path d="M25.700000000000003,833.9 C27.6,831.6 28.900000000000002,831 30.1,831 C31.3,831 32.6,831.6 34.5,833.9" stroke="#222" stroke-width="1.0" fill="none" />
<path d="M26.50,839.50 L30.10,836.20 L33.70,839.50" stroke="#333" stroke-width="0.85" fill="none" />
<path d="M30.1,836.2 L30.1,839.2 C30.1,840.8 26.900000000000002,841.2 26.900000000000002,843.4 C26.900000000000002,845.2 28.900000000000002,845.8 30.900000000000002,845.6 C32.7,845.4 33.1,847 31.6,848.5" stroke="#333" stroke-width="0.85" fill="none" />
<path d="M52.300000000000004,833.9 C54.2,831.6 55.5,831 56.7,831 C57.900000000000006,831 59.2,831.6 61.1,833.9" stroke="#222" stroke-width="1.0" fill="none" />
<path d="M53.10,839.50 L56.70,836.20 L60.30,839.50" stroke="#333" stroke-width="0.85" fill="none" />
<path d="M56.7,836.2 L56.7,839.2 C56.7,840.8 53.5,841.2 53.5,843.4 C53.5,845.2 55.5,845.8 57.5,845.6 C59.300000000000004,845.4 59.7,847 58.2,848.5" stroke="#333" stroke-width="0.85" fill="none" />
<path d="M108.5,836.2 L134.9,836.2 A11.8,11.8 0 0 1 134.9,859.8 L108.5,859.8 A11.8,11.8 0 0 1 108.5,836.2 Z" fill="none" stroke="#444" stroke-width="0.9"/>
<path d="M104.1,833.9 C106.0,831.6 107.3,831 108.5,831 C109.7,831 111.0,831.6 112.9,833.9" stroke="#222" stroke-width="1.0" fill="none" />
<path d="M104.90,839.50 L108.50,836.20 L112.10,839.50" stroke="#333" stroke-width="0.85" fill="none" />
<path d="M108.5,836.2 L108.5,839.2 C108.5,840.8 105.3,841.2 105.3,843.4 C105.3,845.2 107.3,845.8 109.3,845.6 C111.1,845.4 111.5,847 110.0,848.5" stroke="#333" stroke-width="0.85" fill="none" />
<path d="M130.5,833.9 C132.4,831.6 133.70000000000002,831 134.9,831 C136.1,831 137.4,831.6 139.3,833.9" stroke="#222" stroke-width="1.0" fill="none" />
<path d="M131.30,839.50 L134.90,836.20 L138.50,839.50" stroke="#333" stroke-width="0.85" fill="none" />
<path d="M134.9,836.2 L134.9,839.2 C134.9,840.8 131.70000000000002,841.2 131.70000000000002,843.4 C131.70000000000002,845.2 133.70000000000002,845.8 135.70000000000002,845.6 C137.5,845.4 137.9,847 136.4,848.5" stroke="#333" stroke-width="0.85" fill="none" />
<circle cx="200.6" cy="848.0" r="11.8" fill="none" stroke="#444" stroke-width="0.9"/>
<path d="M196.2,833.9 C198.1,831.6 199.4,831 200.6,831 C201.79999999999998,831 203.1,831.6 205.0,833.9" stroke="#222" stroke-width="1.0" fill="none" />
<path d="M197.00,839.50 L200.60,836.20 L204.20,839.50" stroke="#333" stroke-width="0.85" fill="none" />
<path d="M200.6,836.2 L200.6,839.2 C200.6,840.8 197.4,841.2 197.4,843.4 C197.4,845.2 199.4,845.8 201.4,845.6 C203.2,845.4 203.6,847 202.1,848.5" stroke="#333" stroke-width="0.85" fill="none" />
<circle cx="265.9" cy="848.0" r="11.8" fill="none" stroke="#444" stroke-width="0.9"/>
<path d="M261.5,833.9 C263.4,831.6 264.7,831 265.9,831 C267.09999999999997,831 268.4,831.6 270.29999999999995,833.9" stroke="#222" stroke-width="1.0" fill="none" />
<path d="M262.30,839.50 L265.90,836.20 L269.50,839.50" stroke="#333" stroke-width="0.85" fill="none" />
<path d="M265.9,836.2 L265.9,839.2 C265.9,840.8 262.7,841.2 262.7,843.4 C262.7,845.2 264.7,845.8 266.7,845.6 C268.5,845.4 268.9,847 267.4,848.5" stroke="#333" stroke-width="0.85" fill="none" />
<path d="M331.5,836.2 L357.5,836.2 A11.8,11.8 0 0 1 357.5,859.8 L331.5,859.8 A11.8,11.8 0 0 1 331.5,836.2 Z" fill="none" stroke="#444" stroke-width="0.9"/>
<path d="M327.1,833.9 C329.0,831.6 330.3,831 331.5,831 C332.7,831 334.0,831.6 335.9,833.9" stroke="#222" stroke-width="1.0" fill="none" />
<path d="M327.90,839.50 L331.50,836.20 L335.10,839.50" stroke="#333" stroke-width="0.85" fill="none" />
<path d="M331.5,836.2 L331.5,839.2 C331.5,840.8 328.3,841.2 328.3,843.4 C328.3,845.2 330.3,845.8 332.3,845.6 C334.1,845.4 334.5,847 333.0,848.5" stroke="#333" stroke-width="0.85" fill="none" />
<path d="M353.1,833.9 C355.0,831.6 356.3,831 357.5,831 C358.7,831 360.0,831.6 361.9,833.9" stroke="#222" stroke-width="1.0" fill="none" />
<path d="M353.90,839.50 L357.50,836.20 L361.10,839.50" stroke="#333" stroke-width="0.85" fill="none" />
<path d="M357.5,836.2 L357.5,839.2 C357.5,840.8 354.3,841.2 354.3,843.4 C354.3,845.2 356.3,845.8 358.3,845.6 C360.1,845.4 360.5,847 359.0,848.5" stroke="#333" stroke-width="0.85" fill="none" />
<path d="M409.9,836.2 L436.0,836.2 A11.8,11.8 0 0 1 436.0,859.8 L409.9,859.8 A11.8,11.8 0 0 1 409.9,836.2 Z" fill="none" stroke="#444" stroke-width="0.9"/>
<path d="M405.5,833.9 C407.4,831.6 408.7,831 409.9,831 C411.09999999999997,831 412.4,831.6 414.29999999999995,833.9" stroke="#222" stroke-width="1.0" fill="none" />
<path d="M406.30,839.50 L409.90,836.20 L413.50,839.50" stroke="#333" stroke-width="0.85" fill="none" />
<path d="M409.9,836.2 L409.9,839.2 C409.9,840.8 406.7,841.2 406.7,843.4 C406.7,845.2 408.7,845.8 410.7,845.6 C412.5,845.4 412.9,847 411.4,848.5" stroke="#333" stroke-width="0.85" fill="none" />
<path d="M431.6,833.9 C433.5,831.6 434.8,831 436.0,831 C437.2,831 438.5,831.6 440.4,833.9" stroke="#222" stroke-width="1.0" fill="none" />
<path d="M432.40,839.50 L436.00,836.20 L439.60,839.50" stroke="#333" stroke-width="0.85" fill="none" />
<path d="M436.0,836.2 L436.0,839.2 C436.0,840.8 432.8,841.2 432.8,843.4 C432.8,845.2 434.8,845.8 436.8,845.6 C438.6,845.4 439.0,847 437.5,848.5" stroke="#333" stroke-width="0.85" fill="none" />
<circle cx="540.9" cy="848.0" r="11.8" fill="none" stroke="#444" stroke-width="0.9"/>
<path d="M536.5,833.9 C538.4,831.6 539.6999999999999,831 540.9,831 C542.1,831 543.4,831.6 545.3,833.9" stroke="#222" stroke-width="1.0" fill="none" />
<path d="M537.30,839.50 L540.90,836.20 L544.50,839.50" stroke="#333" stroke-width="0.85" fill="none" />
<path d="M540.9,836.2 L540.9,839.2 C540.9,840.8 537.6999999999999,841.2 537.6999999999999,843.4 C537.6999999999999,845.2 539.6999999999999,845.8 541.6999999999999,845.6 C543.5,845.4 543.9,847 542.4,848.5" stroke="#333" stroke-width="0.85" fill="none" />
<path d="M593.4,836.2 L619.0,836.2 A11.8,11.8 0 0 1 619.0,859.8 L593.4,859.8 A11.8,11.8 0 0 1 593.4,836.2 Z" fill="none" stroke="#444" stroke-width="0.9"/>
<path d="M589.0,833.9 C590.9,831.6 592.1999999999999,831 593.4,831 C594.6,831 595.9,831.6 597.8,833.9" stroke="#222" stroke-width="1.0" fill="none" />
<path d="M589.80,839.50 L593.40,836.20 L597.00,839.50" stroke="#333" stroke-width="0.85" fill="none" />
<path d="M593.4,836.2 L593.4,839.2 C593.4,840.8 590.1999999999999,841.2 590.1999999999999,843.4 C590.1999999999999,845.2 592.1999999999999,845.8 594.1999999999999,845.6 C596.0,845.4 596.4,847 594.9,848.5" stroke="#333" stroke-width="0.85" fill="none" />
<path d="M614.6,833.9 C616.5,831.6 617.8,831 619.0,831 C620.2,831 621.5,831.6 623.4,833.9" stroke="#222" stroke-width="1.0" fill="none" />
<path d="M615.40,839.50 L619.00,836.20 L622.60,839.50" stroke="#333" stroke-width="0.85" fill="none" />
<path d="M619.0,836.2 L619.0,839.2 C619.0,840.8 615.8,841.2 615.8,843.4 C615.8,845.2 617.8,845.8 619.8,845.6 C621.6,845.4 622.0,847 620.5,848.5" stroke="#333" stroke-width="0.85" fill="none" />
<circle cx="684.7" cy="848.0" r="11.8" fill="none" stroke="#444" stroke-width="0.9"/>
<path d="M680.3000000000001,833.9 C682.2,831.6 683.5,831 684.7,831 C685.9000000000001,831 687.2,831.6 689.1,833.9" stroke="#222" stroke-width="1.0" fill="none" />
<path d="M681.10,839.50 L684.70,836.20 L688.30,839.50" stroke="#333" stroke-width="0.85" fill="none" />
<path d="M684.7,836.2 L684.7,839.2 C684.7,840.8 681.5,841.2 681.5,843.4 C681.5,845.2 683.5,845.8 685.5,845.6 C687.3000000000001,845.4 687.7,847 686.2,848.5" stroke="#333" stroke-width="0.85" fill="none" />
<circle cx="750.5" cy="848.0" r="11.8" fill="none" stroke="#444" stroke-width="0.9"/>
<path d="M746.1,833.9 C748.0,831.6 749.3,831 750.5,831 C751.7,831 753.0,831.6 754.9,833.9" stroke="#222" stroke-width="1.0" fill="none" />
<path d="M746.90,839.50 L750.50,836.20 L754.10,839.50" stroke="#333" stroke-width="0.85" fill="none" />
<path d="M750.5,836.2 L750.5,839.2 C750.5,840.8 747.3,841.2 747.3,843.4 C747.3,845.2 749.3,845.8 751.3,845.6 C753.1,845.4 753.5,847 752.0,848.5" stroke="#333" stroke-width="0.85" fill="none" />
<circle cx="815.3" cy="848.0" r="11.8" fill="none" stroke="#444" stroke-width="0.9"/>
<path d="M810.9,833.9 C812.8,831.6 814.0999999999999,831 815.3,831 C816.5,831 817.8,831.6 819.6999999999999,833.9" stroke="#222" stroke-width="1.0" fill="none" />
<path d="M811.70,839.50 L815.30,836.20 L818.90,839.50" stroke="#333" stroke-width="0.85" fill="none" />
<path d="M815.3,836.2 L815.3,839.2 C815.3,840.8 812.0999999999999,841.2 812.0999999999999,843.4 C812.0999999999999,845.2 814.0999999999999,845.8 816.0999999999999,845.6 C817.9,845.4 818.3,847 816.8,848.5" stroke="#333" stroke-width="0.85" fill="none" />
<path d="M868.2,836.2 L894.4,836.2 A11.8,11.8 0 0 1 894.4,859.8 L868.2,859.8 A11.8,11.8 0 0 1 868.2,836.2 Z" fill="none" stroke="#444" stroke-width="0.9"/>
<path d="M863.8000000000001,833.9 C865.7,831.6 867.0,831 868.2,831 C869.4000000000001,831 870.7,831.6 872.6,833.9" stroke="#222" stroke-width="1.0" fill="none" />
<path d="M864.60,839.50 L868.20,836.20 L871.80,839.50" stroke="#333" stroke-width="0.85" fill="none" />
<path d="M868.2,836.2 L868.2,839.2 C868.2,840.8 865.0,841.2 865.0,843.4 C865.0,845.2 867.0,845.8 869.0,845.6 C870.8000000000001,845.4 871.2,847 869.7,848.5" stroke="#333" stroke-width="0.85" fill="none" />
<path d="M890.0,833.9 C891.9,831.6 893.1999999999999,831 894.4,831 C895.6,831 896.9,831.6 898.8,833.9" stroke="#222" stroke-width="1.0" fill="none" />
<path d="M890.80,839.50 L894.40,836.20 L898.00,839.50" stroke="#333" stroke-width="0.85" fill="none" />
<path d="M894.4,836.2 L894.4,839.2 C894.4,840.8 891.1999999999999,841.2 891.1999999999999,843.4 C891.1999999999999,845.2 893.1999999999999,845.8 895.1999999999999,845.6 C897.0,845.4 897.4,847 895.9,848.5" stroke="#333" stroke-width="0.85" fill="none" />
<text x="71.80" y="837.50" text-anchor="start" font-size="7.8" fill="#444444" stroke="#444444" stroke-width="0.12">LEFT</text>
<text x="71.80" y="847.20" text-anchor="start" font-size="7.8" fill="#444444" stroke="#444444" stroke-width="0.12">REAR</text>
<text x="152.20" y="837.50" text-anchor="start" font-size="7.8" fill="#444444" stroke="#444444" stroke-width="0.12">LEFT</text>
<text x="152.20" y="847.20" text-anchor="start" font-size="7.8" fill="#444444" stroke="#444444" stroke-width="0.12">REAR</text>
<text x="217.30" y="837.50" text-anchor="start" font-size="7.8" fill="#444444" stroke="#444444" stroke-width="0.12">LEFT</text>
<text x="217.30" y="847.20" text-anchor="start" font-size="7.8" fill="#444444" stroke="#444444" stroke-width="0.12">REAR</text>
<text x="282.80" y="837.50" text-anchor="start" font-size="7.8" fill="#444444" stroke="#444444" stroke-width="0.12">RIGHT</text>
<text x="282.80" y="847.20" text-anchor="start" font-size="7.8" fill="#444444" stroke="#444444" stroke-width="0.12">REAR</text>
<text x="371.60" y="837.50" text-anchor="start" font-size="7.8" fill="#444444" stroke="#444444" stroke-width="0.12">RIGHT</text>
<text x="371.60" y="847.20" text-anchor="start" font-size="7.8" fill="#444444" stroke="#444444" stroke-width="0.12">REAR</text>
<text x="451.00" y="837.50" text-anchor="start" font-size="7.8" fill="#444444" stroke="#444444" stroke-width="0.12">RIGHT</text>
<text x="451.00" y="847.20" text-anchor="start" font-size="7.8" fill="#444444" stroke="#444444" stroke-width="0.12">REAR</text>
<text x="556.30" y="837.50" text-anchor="start" font-size="7.8" fill="#444444" stroke="#444444" stroke-width="0.12">LEFT</text>
<text x="556.30" y="847.20" text-anchor="start" font-size="7.8" fill="#444444" stroke="#444444" stroke-width="0.12">REAR</text>
<text x="636.50" y="837.50" text-anchor="start" font-size="7.8" fill="#444444" stroke="#444444" stroke-width="0.12">LEFT</text>
<text x="636.50" y="847.20" text-anchor="start" font-size="7.8" fill="#444444" stroke="#444444" stroke-width="0.12">REAR</text>
<text x="701.80" y="837.50" text-anchor="start" font-size="7.8" fill="#444444" stroke="#444444" stroke-width="0.12">LEFT</text>
<text x="701.80" y="847.20" text-anchor="start" font-size="7.8" fill="#444444" stroke="#444444" stroke-width="0.12">REAR</text>
<text x="767.10" y="837.50" text-anchor="start" font-size="7.8" fill="#444444" stroke="#444444" stroke-width="0.12">RIGHT</text>
<text x="767.10" y="847.20" text-anchor="start" font-size="7.8" fill="#444444" stroke="#444444" stroke-width="0.12">REAR</text>
<text x="829.80" y="837.50" text-anchor="start" font-size="7.8" fill="#444444" stroke="#444444" stroke-width="0.12">RIGHT</text>
<text x="829.80" y="847.20" text-anchor="start" font-size="7.8" fill="#444444" stroke="#444444" stroke-width="0.12">REAR</text>
<text x="909.80" y="837.50" text-anchor="start" font-size="7.8" fill="#444444" stroke="#444444" stroke-width="0.12">RIGHT</text>
<text x="909.80" y="847.20" text-anchor="start" font-size="7.8" fill="#444444" stroke="#444444" stroke-width="0.12">REAR</text>
<text transform="translate(27.30,825.20) rotate(-90)" text-anchor="start" font-size="7.8" fill="#444444" stroke="#444444" stroke-width="0.12">LT GRN/ORG</text>
<text transform="translate(53.90,825.20) rotate(-90)" text-anchor="start" font-size="7.8" fill="#444444" stroke="#444444" stroke-width="0.12">BRN</text>
<text transform="translate(105.70,825.20) rotate(-90)" text-anchor="start" font-size="7.8" fill="#444444" stroke="#444444" stroke-width="0.12">RED/LT GRN</text>
<text transform="translate(132.10,825.20) rotate(-90)" text-anchor="start" font-size="7.8" fill="#444444" stroke="#444444" stroke-width="0.12">BRN</text>
<text transform="translate(197.80,825.20) rotate(-90)" text-anchor="start" font-size="7.8" fill="#444444" stroke="#444444" stroke-width="0.12">BRN</text>
<text transform="translate(263.10,825.20) rotate(-90)" text-anchor="start" font-size="7.8" fill="#444444" stroke="#444444" stroke-width="0.12">BRN</text>
<text transform="translate(328.70,825.20) rotate(-90)" text-anchor="start" font-size="7.8" fill="#444444" stroke="#444444" stroke-width="0.12">BRN</text>
<text transform="translate(354.70,825.20) rotate(-90)" text-anchor="start" font-size="7.8" fill="#444444" stroke="#444444" stroke-width="0.12">ORG/LT BLU</text>
<text transform="translate(407.10,825.20) rotate(-90)" text-anchor="start" font-size="7.8" fill="#444444" stroke="#444444" stroke-width="0.12">BRN</text>
<text transform="translate(433.20,825.20) rotate(-90)" text-anchor="start" font-size="7.8" fill="#444444" stroke="#444444" stroke-width="0.12">RED/LT GRN</text>
<text transform="translate(538.10,825.20) rotate(-90)" text-anchor="start" font-size="7.8" fill="#444444" stroke="#444444" stroke-width="0.12">LT GRN/ORG</text>
<text transform="translate(590.60,825.20) rotate(-90)" text-anchor="start" font-size="7.8" fill="#444444" stroke="#444444" stroke-width="0.12">RED/LT GRN</text>
<text transform="translate(616.20,825.20) rotate(-90)" text-anchor="start" font-size="7.8" fill="#444444" stroke="#444444" stroke-width="0.12">BRN</text>
<text transform="translate(681.90,825.20) rotate(-90)" text-anchor="start" font-size="7.8" fill="#444444" stroke="#444444" stroke-width="0.12">BRN</text>
<text transform="translate(747.70,825.20) rotate(-90)" text-anchor="start" font-size="7.8" fill="#444444" stroke="#444444" stroke-width="0.12">BRN</text>
<text transform="translate(812.50,825.20) rotate(-90)" text-anchor="start" font-size="7.8" fill="#444444" stroke="#444444" stroke-width="0.12">ORG/LT BLU</text>
<text transform="translate(865.40,825.20) rotate(-90)" text-anchor="start" font-size="7.8" fill="#444444" stroke="#444444" stroke-width="0.12">BRN</text>
<text transform="translate(891.60,825.20) rotate(-90)" text-anchor="start" font-size="7.8" fill="#444444" stroke="#444444" stroke-width="0.12">RED/LT GRN</text></svg>
</body></html>
